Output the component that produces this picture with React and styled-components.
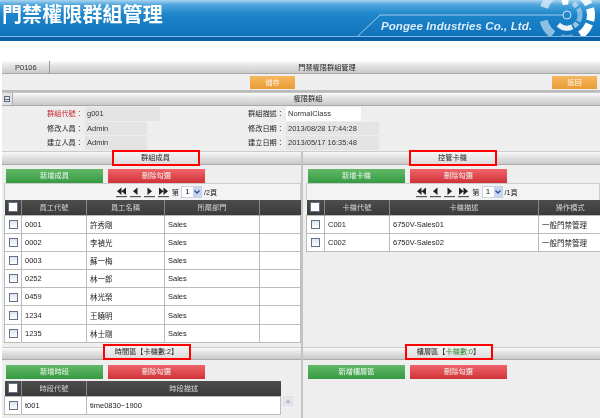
import React from "react";
import styled, { createGlobalStyle } from "styled-components";

const Global = createGlobalStyle`
  html, body { margin: 0; padding: 0; background: #fff; }
  body { width: 600px; height: 418px; overflow: hidden; font-family: "Liberation Sans", "Noto Sans CJK TC", sans-serif; font-size: 7.5px; color: #222; }
  * { box-sizing: border-box; }
`;

const Page = styled.div`width: 600px; height: 418px; overflow: hidden; background: #fff; display: flex; flex-direction: column; filter: blur(.3px);`;
const Banner = styled.header`
  position: relative; height: 41px; flex: none;
  background: linear-gradient(#a9d4f0 0, #4ca4dc 5px, #1f86cb 14px, #0f73bb 36px, #7fb8e0 36px, #7fb8e0 37px, #0a5fa9 37px, #0a5fa9 41px);
`;
const BannerTitle = styled.h1`
  position: relative; margin: 0; padding: 3px 0 0 2px; font: bold 20px/22px "Noto Sans CJK TC", sans-serif; color: #fff; letter-spacing: .1px;
`;
const Company = styled.div`
  position: absolute; left: 381px; top: 19px; color: #dcecf8; font: italic bold 11.5px/14px "Liberation Sans", sans-serif; letter-spacing: .08px;
`;
const BannerArt = styled.svg`position: absolute; left: 0; top: 0;`;

const Content = styled.main`flex: 1; margin: 20px 0 0 2px; background: #eee; display: flex; flex-direction: column; min-height: 0;`;
const barBg = `linear-gradient(#fafafa 0, #e6e6e6 35%, #c9c9c9 100%)`;
const TitleBar = styled.div`
  height: 13px; flex: none; display: grid; grid-template-columns: 48px 1fr; background: ${barBg}; border-bottom: 1px solid #aaa;
`;
const TitleCode = styled.div`padding-left: 13px; line-height: 13px; font-size: 7.5px; border-right: 1px solid #999; color: #333;`;
const TitleText = styled.div`text-align: center; line-height: 13px; font-size: 7.2px; color: #222; padding-left: 4px;`;
const ActionBar = styled.div`height: 18px; flex: none; display: flex; justify-content: space-between; align-items: center; padding: 1px 3px 0 248px; border-bottom: 2px solid #bbb;`;
const OrangeButton = styled.div`
  width: 45px; height: 13px; background: linear-gradient(#f6b65f, #ea9b36); color: #fdf3e4; font-size: 7.2px; line-height: 13px; text-align: center;
`;
const SectionBar = styled.div`
  height: 14px; flex: none; position: relative; background: ${barBg}; border-top: 1px solid #c4c4c4; border-bottom: 1px solid #aaa; text-align: center; font-size: 7.2px; line-height: 12px; color: #222; padding-left: 14px;
`;
const Toggle = styled.span`
  position: absolute; left: 0; top: 0; width: 11px; height: 12px; background: #dfe3e8; border-right: 1px solid #aaa; display: flex; align-items: center; justify-content: center;
`;
const ToggleBox = styled.span`width: 6px; height: 6px; border: 1px solid #5a6a80; display: flex; align-items: center; justify-content: center;
  &::after { content: ""; width: 4px; height: 1px; background: #5a6a80; }`;
const FormGrid = styled.div`flex: none; display: grid; grid-template-columns: 81px 65px 136px 1fr; grid-auto-rows: 14.5px; height: 45px; padding-top: 1px;`;
const FormLabel = styled.div`text-align: right; line-height: 14px; font-size: 7.2px; color: ${p => p.$red ? "#c3242c" : "#222"}; white-space: nowrap;`;
const FieldCell = styled.div`padding-left: 2px;`;
const Field = styled.div`
  height: 13.5px; width: ${p => p.$w}px; padding-left: 2px; background: ${p => p.$white ? "#fff" : "#e4e4e4"}; line-height: 14px; font-size: 7.5px; color: #333; white-space: nowrap;
`;
const Columns = styled.div`flex: none; display: grid; grid-template-columns: 301px 1fr; height: 196px;`;
const Column = styled.section`border-right: ${p => p.$first ? "2px solid #c4c4c4" : "none"}; min-width: 0; display: flex; flex-direction: column;`;
const Panel = styled.div`position: relative; background: ${barBg}; height: ${p => p.$h || 14}px; flex: none; border-top: 1px solid #ccc; border-bottom: 1px solid #aaa; display: flex; justify-content: center;`;
const HeadBox = styled.div`
  width: 88px; height: 16px; margin-top: ${p => p.$top || -2}px; flex: none; border: 2px solid #f00; text-align: center; font-size: 7.2px; line-height: 12px; color: #222; white-space: nowrap; position: relative; left: ${p => p.$x || 0}px; background: linear-gradient(#f4f4f4, #ddd);
`;
const GreenText = styled.span`color: #2f8a3a;`;
const Buttons = styled.div`height: 18px; flex: none; display: flex; gap: 5px; padding: ${p => p.$top || 4}px 0 0 ${p => p.$pad}px;`;
const Btn = styled.div`
  width: 97px; height: 14px; font-size: 7.2px; line-height: 14px; text-align: center; color: #eef7ee;
  background: ${p => p.$red ? "linear-gradient(#f0646a, #cf3339)" : "linear-gradient(#62b968, #369a42)"};
`;
const Pager = styled.div`height: 17px; flex: none; margin-left: ${p => p.$pad}px; background: #f3f3f3; border: 1px solid #ccc; border-bottom: none; display: flex; align-items: center; justify-content: center; gap: 1px; font-size: 7.2px; color: #222; padding-left: 28px;`;
const PagerIcon = styled.svg`display: block; margin-right: 2px; flex: none;`;
const PagerSelect = styled.div`width: 21px; height: 12px; margin: 0 1px; background: #fff; border: 1px solid #c8d4e4; display: flex; font-size: 8px; line-height: 10px;`;
const SelectValue = styled.span`flex: 1; text-align: center;`;
const SelectArrow = styled.span`width: 8px; background: #c6d6ee; display: flex; align-items: center; justify-content: center;`;
const Table = styled.table`
  border-collapse: collapse; table-layout: fixed; width: ${p => p.$w}px; margin-left: ${p => p.$pad}px; font-size: 7.5px; color: #222;
`;
const Th = styled.th`
  height: 15px; padding: 0; background: linear-gradient(#4d4d4d, #3a3a3a); color: #d6d6d6; font-weight: normal; font-size: 7.2px; border-left: 1px solid #888; text-align: center;
  &:first-child { border-left: none; }
`;
const Td = styled.td`
  height: 18.2px; padding: 0 0 0 3px; background: #fff; border: 1px solid #bbb; white-space: nowrap; overflow: hidden;
  font-size: 7.5px; color: #222;
`;
const TdBox = styled(Td)`padding: 0; text-align: center;`;
const Check = styled.span`
  display: inline-block; vertical-align: middle; width: ${p => p.$head ? 10 : 9}px; height: ${p => p.$head ? 10 : 9}px; border: 1px solid #62728a; background: ${p => p.$head ? "#fff" : "linear-gradient(#e0e4ea,#fff)"}; 
`;
const BottomRow = styled.div`flex: 1; display: grid; grid-template-columns: 301px 1fr; min-height: 0;`;
const TableWrap = styled.div`position: relative; flex: 1; min-height: 0; overflow: hidden; padding-top: 3px;`;
const ScrollUp = styled.div`position: absolute; left: 281px; top: 18px; width: 10px; height: 10px; background: #e4e8ec; border: 1px solid #dde; display: flex; align-items: center; justify-content: center;`;

const Arrow = ({ d }) => (
  <PagerIcon width="11" height="12" viewBox="0 0 11 12">
    <path d={d} fill="#222" />
    <rect x="0" y="10" width="11" height="1.2" fill="#555" />
  </PagerIcon>
);
const First = "M5.5 1.5v7.5L1 5.2zM10 1.5v7.5L5.5 5.2z";
const Prev = "M7.5 1.5v7.5L3 5.2z";
const Next = "M3.5 1.5v7.5L8 5.2z";
const Last = "M1 1.5v7.5l4.5-3.8zM5.5 1.5v7.5l4.5-3.8z";

const PagerBlock = ({ pad, total }) => (
  <Pager $pad={pad}>
    <Arrow d={First} /><Arrow d={Prev} /><Arrow d={Next} /><Arrow d={Last} />
    <span>第</span>
    <PagerSelect>
      <SelectValue>1</SelectValue>
      <SelectArrow>
        <svg width="6" height="4" viewBox="0 0 6 4"><path d="M.5.5 3 3 5.5.5" fill="none" stroke="#2a4f94" strokeWidth="1.3" /></svg>
      </SelectArrow>
    </PagerSelect>
    <span>/{total}頁</span>
  </Pager>
);

const arc = (r, a, b) => {
  const p = t => [567 + r * Math.cos(t * Math.PI / 180), 15 + r * Math.sin(t * Math.PI / 180)].map(n => n.toFixed(2)).join(" ");
  return `M${p(a)}A${r} ${r} 0 0 1 ${p(b)}`;
};
const logoArcs = [
  [24, 8, -16, 14, "#fff", 1], [24, 8, 22, 56, "#fff", 1], [24, 8, -52, -26, "#fff", .85],
  [24, 8, -162, -128, "#cfe5f6", .85], [24, 8, 126, 166, "#cfe5f6", .65], [24, 8, 74, 106, "#cfe5f6", .4],
  [24, 8, -90, -68, "#cfe5f6", .5],
  [13, 5, -112, -84, "#fff", 1], [13, 5, -62, -40, "#cfe5f6", .7], [13, 5, -30, 30, "#cfe5f6", .55],
  [13, 5, 38, 58, "#cfe5f6", .7], [13, 5, 66, 132, "#fff", .9],
];
const Logo = () => (
  <BannerArt width="600" height="36" viewBox="0 0 600 36">
    <path d="M358 36 380 15H563" fill="none" stroke="#9fcdec" strokeWidth="1" />
    <circle cx="567" cy="15" r="4" fill="none" stroke="#cfe6f6" strokeWidth="1" />
    {logoArcs.map(([r, w, a, b, c, o]) => (
      <path key={`${r}${a}`} d={arc(r, a, b)} fill="none" stroke={c} strokeWidth={w} opacity={o} />
    ))}
  </BannerArt>
);

const members = [
  ["0001", "許秀剛"], ["0002", "李禎光"], ["0003", "蘇一梅"], ["0252", "林一郎"],
  ["0459", "林光榮"], ["1234", "王曉明"], ["1235", "林士剛"],
];
const cards = [["C001", "6750V-Sales01"], ["C002", "6750V-Sales02"]];

export default function App() {
  return (
    <Page>
      <Global />
      <Banner>
        <Logo />
        <BannerTitle>門禁權限群組管理</BannerTitle>
        <Company>Pongee Industries Co., Ltd.</Company>
      </Banner>
      <Content>
        <TitleBar><TitleCode>P0106</TitleCode><TitleText>門禁權限群組管理</TitleText></TitleBar>
        <ActionBar><OrangeButton>儲存</OrangeButton><OrangeButton>返回</OrangeButton></ActionBar>
        <SectionBar><Toggle><ToggleBox /></Toggle>權限群組</SectionBar>
        <FormGrid>
          <FormLabel $red>群組代號：</FormLabel><FieldCell><Field $w={75}>g001</Field></FieldCell>
          <FormLabel>群組描述：</FormLabel><FieldCell><Field $w={75} $white>NormalClass</Field></FieldCell>
          <FormLabel>修改人員：</FormLabel><FieldCell><Field $w={62}>Admin</Field></FieldCell>
          <FormLabel>修改日期：</FormLabel><FieldCell><Field $w={93}>2013/08/28 17:44:28</Field></FieldCell>
          <FormLabel>建立人員：</FormLabel><FieldCell><Field $w={62}>Admin</Field></FieldCell>
          <FormLabel>建立日期：</FormLabel><FieldCell><Field $w={93}>2013/05/17 16:35:48</Field></FieldCell>
        </FormGrid>
        <Columns>
          <Column $first>
            <Panel><HeadBox $x={4}>群組成員</HeadBox></Panel>
            <Buttons $pad={4}><Btn>新增成員</Btn><Btn $red>刪除勾選</Btn></Buttons>
            <PagerBlock pad={2} total={2} />
            <Table $w={296} $pad={2}>
              <colgroup><col width="17" /><col width="65" /><col width="78" /><col width="95" /><col width="41" /></colgroup>
              <thead><tr><Th><Check $head /></Th><Th>員工代號</Th><Th>員工名稱</Th><Th>所屬部門</Th><Th /></tr></thead>
              <tbody>
                {members.map(m => (
                  <tr key={m[0]}><TdBox><Check /></TdBox><Td>{m[0]}</Td><Td>{m[1]}</Td><Td>Sales</Td><Td /></tr>
                ))}
              </tbody>
            </Table>
          </Column>
          <Column>
            <Panel><HeadBox $x={1}>控管卡機</HeadBox></Panel>
            <Buttons $pad={5}><Btn>新增卡機</Btn><Btn $red>刪除勾選</Btn></Buttons>
            <PagerBlock pad={3} total={1} />
            <Table $w={295} $pad={3}>
              <colgroup><col width="18" /><col width="65" /><col width="149" /><col width="63" /></colgroup>
              <thead><tr><Th><Check $head /></Th><Th>卡機代號</Th><Th>卡機描述</Th><Th>操作模式</Th></tr></thead>
              <tbody>
                {cards.map(c => (
                  <tr key={c[0]}><TdBox><Check /></TdBox><Td>{c[0]}</Td><Td>{c[1]}</Td><Td>一般門禁管理</Td></tr>
                ))}
              </tbody>
            </Table>
          </Column>
        </Columns>
        <BottomRow>
          <Column $first>
            <Panel $h={13}><HeadBox $x={-5} $top={-4}>時間區【卡機數:2】</HeadBox></Panel>
            <Buttons $pad={4} $top={5}><Btn>新增時段</Btn><Btn $red>刪除勾選</Btn></Buttons>
            <TableWrap>
              <Table $w={276} $pad={2}>
                <colgroup><col width="17" /><col width="65" /><col width="194" /></colgroup>
                <thead><tr><Th><Check $head /></Th><Th>時段代號</Th><Th>時段描述</Th></tr></thead>
                <tbody><tr><TdBox><Check /></TdBox><Td>t001</Td><Td>time0830~1900</Td></tr></tbody>
              </Table>
              <ScrollUp><svg width="6" height="4" viewBox="0 0 6 4"><path d="M0 4 3 0l3 4z" fill="#b4c0cc" /></svg></ScrollUp>
            </TableWrap>
          </Column>
          <Column>
            <Panel $h={13}><HeadBox $x={-3} $top={-4}>樓層區【<GreenText>卡機數:0</GreenText>】</HeadBox></Panel>
            <Buttons $pad={5} $top={5}><Btn>新增樓層區</Btn><Btn $red>刪除勾選</Btn></Buttons>
          </Column>
        </BottomRow>
      </Content>
    </Page>
  );
}
